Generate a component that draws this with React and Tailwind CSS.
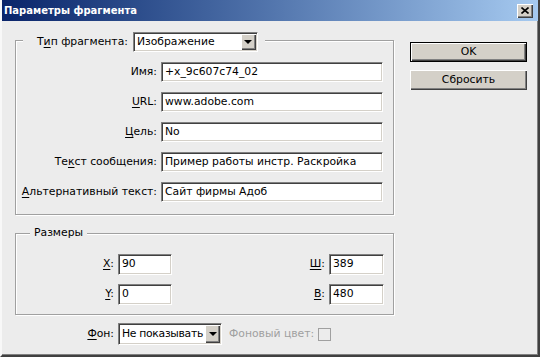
import React from "react";

function Field({ children, className = "" }) {
  return (
    <div
      className={`bg-white border border-t-[#808080] border-l-[#808080] border-b-white border-r-white shadow-[inset_1px_1px_0_#404040,inset_-1px_-1px_0_#d4d0c8] flex items-center pl-[3px] whitespace-nowrap overflow-hidden ${className}`}
    >
      {children}
    </div>
  );
}

function Arrow() {
  return (
    <div className="w-[15px] shrink-0 h-full bg-[#d4d0c8] shadow-[inset_1px_1px_0_#ffffff,inset_-1px_-1px_0_#404040,inset_-2px_-2px_0_#808080] flex items-center justify-center">
      <div className="w-0 h-0 border-l-[4px] border-r-[4px] border-t-[4px] border-l-transparent border-r-transparent border-t-black" />
    </div>
  );
}

function Select({ children, className = "" }) {
  return (
    <div
      className={`bg-white border border-t-[#808080] border-l-[#808080] border-b-white border-r-white shadow-[inset_1px_1px_0_#404040,inset_-1px_-1px_0_#d4d0c8] flex items-stretch p-[1px] ${className}`}
    >
      <div className="flex-1 min-w-0 flex items-center pl-[2px] whitespace-nowrap overflow-hidden">{children}</div>
      <Arrow />
    </div>
  );
}

function U({ children }) {
  return <span className="underline underline-offset-2">{children}</span>;
}

export default function App() {
  return (
    <div className="w-[540px] h-[357px] bg-[#ececec] flex flex-col border-l-2 border-l-[#f8f8f8] border-r-2 border-r-[#404040] border-b-2 border-b-[#404040] shadow-[inset_-1px_-1px_0_#808080] font-['DejaVu_Sans',sans-serif] text-[10.8px] text-black leading-none overflow-hidden">
      {/* Title bar */}
      <div className="h-[21px] shrink-0 bg-linear-to-r from-[#0a246a] to-[#a6caf0] flex items-center pl-[2px] pr-[5px]">
        <span className="text-white font-bold text-[10px]">Параметры фрагмента</span>
        <div className="ml-auto w-[16px] h-[14px] bg-[#d4d0c8] shadow-[inset_1px_1px_0_#ffffff,inset_-1px_-1px_0_#404040,inset_-2px_-2px_0_#808080] flex items-center justify-center">
          <svg width="8" height="7" viewBox="0 0 8 7">
            <path d="M0.5 0.5 L7.5 6.5 M7.5 0.5 L0.5 6.5" stroke="black" strokeWidth="1.6" />
          </svg>
        </div>
      </div>

      {/* Body */}
      <div className="flex flex-1">
        <div className="ml-[13px] w-[379px] flex flex-col">
          {/* Group 1 */}
          <div className="mt-[19px] border border-[#a0a0a0] shadow-[1px_1px_0_#ffffff,inset_1px_1px_0_#ffffff] pb-[12px]">
            <div className="-mt-[9px] ml-[7px] w-fit h-[20px] bg-[#ececec] pl-[14px] pr-[7px] flex items-center">
              <span>
                Т<U>и</U>п фрагмента:
              </span>
              <Select className="ml-[5px] w-[125px] h-[20px]">Изображение</Select>
            </div>
            <div className="mt-[10px] grid grid-cols-[141px_222px] gap-x-[4px] gap-y-[10px] items-center">
              <span className="text-right">Имя:</span>
              <Field className="h-[20px]">+x_9c607c74_02</Field>
              <span className="text-right">
                <U>U</U>RL:
              </span>
              <Field className="h-[20px]">www.adobe.com</Field>
              <span className="text-right">
                <U>Ц</U>ель:
              </span>
              <Field className="h-[20px]">No</Field>
              <span className="text-right">
                Те<U>к</U>ст сообщения:
              </span>
              <Field className="h-[20px]">Пример работы инстр. Раскройка</Field>
              <span className="text-right">
                <U>А</U>льтернативный текст:
              </span>
              <Field className="h-[20px]">Сайт фирмы Адоб</Field>
            </div>
          </div>

          {/* Group 2 */}
          <div className="mt-[18px] border border-[#a0a0a0] shadow-[1px_1px_0_#ffffff,inset_1px_1px_0_#ffffff] pb-[9px]">
            <div className="-mt-[8px] ml-[14px] w-fit h-[15px] bg-[#ececec] px-[4px] flex items-center">Размеры</div>
            <div className="mt-[13px] flex items-center h-[21px]">
              <span className="w-[98px] text-right">
                <U>X</U>:
              </span>
              <Field className="ml-[4px] w-[54px] h-[21px]">90</Field>
              <span className="ml-auto">
                <U>Ш</U>:
              </span>
              <Field className="ml-[4px] mr-[9px] w-[55px] h-[21px]">389</Field>
            </div>
            <div className="mt-[9px] flex items-center h-[21px]">
              <span className="w-[98px] text-right">
                <U>Y</U>:
              </span>
              <Field className="ml-[4px] w-[54px] h-[21px]">0</Field>
              <span className="ml-auto">
                <U>В</U>:
              </span>
              <Field className="ml-[4px] mr-[9px] w-[55px] h-[21px]">480</Field>
            </div>
          </div>

          {/* Фон row */}
          <div className="mt-[8px] flex items-center h-[22px]">
            <span className="w-[99px] text-right">
              <U>Ф</U>он:
            </span>
            <Select className="ml-[4px] w-[104px] h-[22px]">
              <span className="tracking-[-0.3px]">Не показывать</span>
            </Select>
            <span className="ml-[7px] text-[#a0a0a0]">Фоновый цвет:</span>
            <div className="ml-[4px] w-[13px] h-[13px] border border-[#a0a0a0]" />
          </div>
        </div>

        {/* Buttons */}
        <div className="ml-[16px] w-[117px] flex flex-col">
          <div className="mt-[21px] h-[20px] border border-black bg-[#d4d0c8] shadow-[inset_1px_1px_0_#ffffff,inset_-1px_-1px_0_#404040,inset_-2px_-2px_0_#808080] flex items-center justify-center">
            OK
          </div>
          <div className="mt-[8px] h-[20px] bg-[#d4d0c8] shadow-[inset_1px_1px_0_#ffffff,inset_-1px_-1px_0_#404040,inset_-2px_-2px_0_#808080] flex items-center justify-center">
            Сбросить
          </div>
        </div>
      </div>
    </div>
  );
}
